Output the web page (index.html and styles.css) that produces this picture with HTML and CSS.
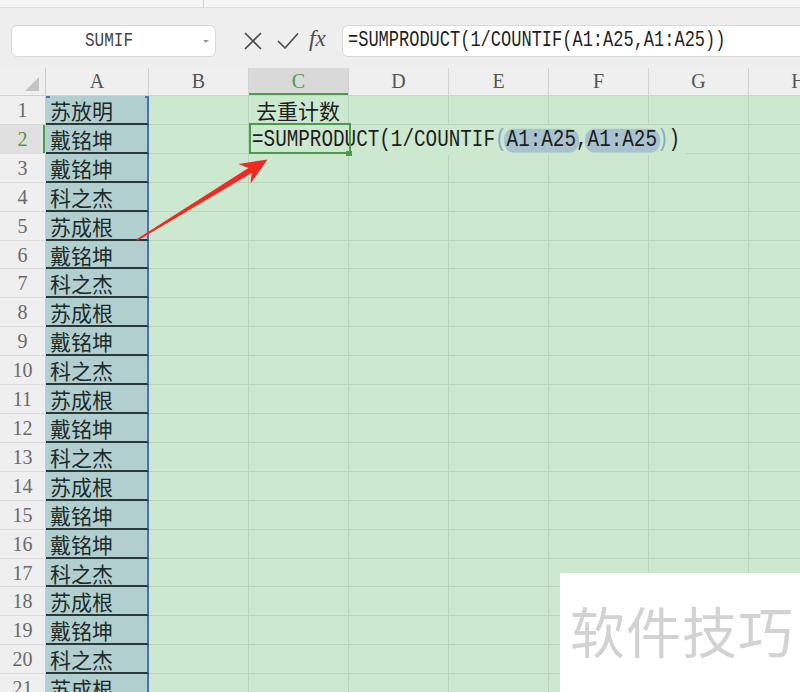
FILE: index.html
```html
<!DOCTYPE html>
<html lang="zh">
<head>
<meta charset="utf-8">
<title>去重计数</title>
<link rel="stylesheet" href="styles.css">
</head>
<body>
<div class="app">
  <div class="tabstrip"><span class="tabsep"></span></div>
  <div class="toolbar">
    <div class="namebox"><span class="namebox-text"><span class="tall">SUMIF</span></span><span class="caret"></span></div>
    <div class="fxicons">
      <svg class="ic-x" width="18" height="18" viewBox="0 0 18 18"><path d="M1.5 1.5 L16.5 16.5 M16.5 1.5 L1.5 16.5" fill="none" stroke="#4d4d4d" stroke-width="1.7" stroke-linecap="round"/></svg>
      <svg class="ic-check" width="22" height="18" viewBox="0 0 22 18"><path d="M1.5 9.5 L8 16 L20.5 2" fill="none" stroke="#4d4d4d" stroke-width="1.7" stroke-linecap="round" stroke-linejoin="round"/></svg>
      <span class="fx">fx</span>
    </div>
    <div class="formulabar"><span class="tall">=SUMPRODUCT(1/COUNTIF(A1:A25,A1:A25))</span></div>
  </div>

  <div class="sheet">
    <div class="hrow">
      <div class="corner"><span class="tri"></span></div>
      <div class="hc hc-a">A</div>
      <div class="hc">B</div>
      <div class="hc active">C</div>
      <div class="hc">D</div>
      <div class="hc">E</div>
      <div class="hc">F</div>
      <div class="hc">G</div>
      <div class="hc">H</div>
    </div>

    <div class="row">
      <div class="rh">1</div>
      <div class="ca first">苏放明</div>
      <div class="rest"><div class="cb"></div><div class="cc title">去重计数</div></div>
    </div>
    <div class="row">
      <div class="rh active">2</div>
      <div class="ca">戴铭坤</div>
      <div class="rest"><div class="cb"></div><div class="cc sel"><span class="ftext">=SUMPRODUCT(1/COUNTIF<span class="par">(</span><span class="ref">A1:A25</span>,<span class="ref">A1:A25</span><span class="par">)</span>)</span></div></div>
    </div>
    <div class="row"><div class="rh">3</div><div class="ca">戴铭坤</div><div class="rest"></div></div>
    <div class="row"><div class="rh">4</div><div class="ca">科之杰</div><div class="rest"></div></div>
    <div class="row"><div class="rh">5</div><div class="ca">苏成根</div><div class="rest"></div></div>
    <div class="row"><div class="rh">6</div><div class="ca">戴铭坤</div><div class="rest"></div></div>
    <div class="row"><div class="rh">7</div><div class="ca">科之杰</div><div class="rest"></div></div>
    <div class="row"><div class="rh">8</div><div class="ca">苏成根</div><div class="rest"></div></div>
    <div class="row"><div class="rh">9</div><div class="ca">戴铭坤</div><div class="rest"></div></div>
    <div class="row"><div class="rh">10</div><div class="ca">科之杰</div><div class="rest"></div></div>
    <div class="row"><div class="rh">11</div><div class="ca">苏成根</div><div class="rest"></div></div>
    <div class="row"><div class="rh">12</div><div class="ca">戴铭坤</div><div class="rest"></div></div>
    <div class="row"><div class="rh">13</div><div class="ca">科之杰</div><div class="rest"></div></div>
    <div class="row"><div class="rh">14</div><div class="ca">苏成根</div><div class="rest"></div></div>
    <div class="row"><div class="rh">15</div><div class="ca">戴铭坤</div><div class="rest"></div></div>
    <div class="row"><div class="rh">16</div><div class="ca">戴铭坤</div><div class="rest"></div></div>
    <div class="row"><div class="rh">17</div><div class="ca">科之杰</div><div class="rest"></div></div>
    <div class="row"><div class="rh">18</div><div class="ca">苏成根</div><div class="rest"></div></div>
    <div class="row"><div class="rh">19</div><div class="ca">戴铭坤</div><div class="rest"></div></div>
    <div class="row"><div class="rh">20</div><div class="ca">科之杰</div><div class="rest"></div></div>
    <div class="row"><div class="rh">21</div><div class="ca">苏成根</div><div class="rest"></div></div>
  </div>

  <svg class="arrow" width="800" height="692" viewBox="0 0 800 692">
    <polygon points="137.4,240.8 251.6,173 250.6,183.5 267.5,159.5 238.5,164 248.4,167.9 136.6,239.2" fill="#ee2a23"/>
  </svg>

  <div class="watermark">软件技巧</div>
</div>
</body>
</html>
```

FILE: styles.css
```css
html, body {
  margin: 0;
  padding: 0;
  background: #ffffff;
}

.app {
  position: relative;
  width: 800px;
  height: 692px;
  overflow: hidden;
  background: #eeeeee;
}

.tall {
  display: inline-block;
  transform: scaleY(1.3);
}

/* top strip (tabs) */
.tabstrip {
  height: 7px;
  background: #f6f6f6;
  border-bottom: 1px solid #dcdcdc;
  display: flex;
}
.tabsep {
  margin-left: 203px;
  width: 1px;
  background: #d4d4d4;
}

/* toolbar */
.toolbar {
  height: 60px;
  box-sizing: border-box;
  padding-top: 17px;
  display: flex;
  align-items: flex-start;
  background: #eeeeee;
}
.namebox {
  margin-left: 11px;
  width: 205px;
  height: 32px;
  box-sizing: border-box;
  background: #ffffff;
  border: 1px solid #d9d9d9;
  border-radius: 6px;
  display: flex;
  align-items: center;
}
.namebox-text {
  flex: 1;
  text-align: center;
  padding-left: 3px;
  font-family: "Liberation Mono", monospace;
  font-size: 16px;
  line-height: 30px;
  color: #444444;
}
.caret {
  width: 0;
  height: 0;
  margin-right: 6px;
  border-left: 3px solid transparent;
  border-right: 3px solid transparent;
  border-top: 3px solid #9a9a9a;
}
.fxicons {
  height: 32px;
  margin-left: 28px;
  display: flex;
  align-items: center;
}
.ic-check {
  margin-left: 15px;
}
.fx {
  margin-left: 10px;
  width: 24px;
  font-family: "Liberation Serif", serif;
  font-style: italic;
  font-size: 23px;
  color: #4d4d4d;
  line-height: 32px;
  position: relative;
  top: -2px;
}
.formulabar {
  flex: 1;
  margin-left: 9px;
  height: 32px;
  box-sizing: border-box;
  background: #ffffff;
  border: 1px solid #d9d9d9;
  border-right: none;
  border-radius: 6px 0 0 6px;
  padding-left: 5px;
  font-family: "Liberation Mono", monospace;
  font-size: 17px;
  line-height: 30px;
  color: #1f1f1f;
  white-space: nowrap;
}

/* sheet */
.sheet {
  width: 1000px;
}
.hrow {
  height: 28px;
  display: flex;
  background: #efefef;
  box-sizing: border-box;
  border-bottom: 1px solid #cfcfcf;
}
.corner {
  width: 46px;
  box-sizing: border-box;
  border-right: 1px solid #cfcfcf;
  position: relative;
}
.tri {
  position: absolute;
  right: 6px;
  bottom: 4px;
  width: 0;
  height: 0;
  border-left: 14px solid transparent;
  border-bottom: 14px solid #c4c4c4;
}
.hc {
  width: 100px;
  box-sizing: border-box;
  border-right: 1px solid #d2d2d2;
  text-align: center;
  font-family: "Liberation Serif", serif;
  font-size: 20px;
  line-height: 27px;
  color: #555555;
}
.hc-a {
  width: 103px;
}
.hc.active {
  background: #d9d9d9;
  color: #4a9a4a;
  box-shadow: inset 0 -2px 0 #4c9a4c;
}

.row {
  height: 28.92px;
  display: flex;
}
.rh {
  width: 46px;
  flex: none;
  box-sizing: border-box;
  background: #efefef;
  border-right: 1px solid #cccccc;
  border-bottom: 1px solid #dadada;
  text-align: center;
  font-family: "Liberation Serif", serif;
  font-size: 20px;
  line-height: 28px;
  color: #6a6a6a;
}
.rh.active {
  background: #e0e0e0;
  color: #4a9a4a;
  box-shadow: inset -2px 0 0 #4c9a4c;
}
.ca {
  width: 103px;
  flex: none;
  box-sizing: border-box;
  background: #b2cfd0;
  border-bottom: 2px solid #2b3838;
  border-right: 2px solid #4e6fbd;
  padding-left: 4px;
  font-family: "Noto Sans CJK SC", sans-serif;
  font-size: 21px;
  line-height: 28px;
  color: #1d2a2a;
  position: relative;
}
.ca.first::before,
.ca.first::after {
  content: "";
  position: absolute;
  top: 0;
  width: 4px;
  height: 2px;
  background: #4e6fbd;
}
.ca.first::before { left: 0; }
.ca.first::after { right: -2px; }

.rest {
  flex: 1;
  display: flex;
  box-sizing: border-box;
  background-color: #cce8cf;
  background-image: repeating-linear-gradient(to right, transparent 0, transparent 99px, #b7d5bb 99px, #b7d5bb 100px);
  border-bottom: 1px solid #b9d6bd;
}
.cb {
  width: 100px;
  flex: none;
}
.cc {
  width: 100px;
  flex: none;
  position: relative;
  white-space: nowrap;
}
.cc.title {
  padding-left: 7px;
  font-family: "Noto Sans CJK SC", sans-serif;
  font-size: 21px;
  line-height: 28px;
  color: #1d1d1d;
}
.cc.sel::after {
  content: "";
  position: absolute;
  left: 0;
  top: -2px;
  width: 102px;
  height: 31px;
  box-sizing: border-box;
  border: 2px solid #4c9a4c;
}
.cc.sel::before {
  content: "";
  position: absolute;
  left: 97px;
  top: 26px;
  width: 6px;
  height: 5px;
  background: #4c9a4c;
  z-index: 1;
}
.ftext {
  display: inline-block;
  padding: 0 6px 0 3px;
  margin-top: 3px;
  background: #cce8cf;
  font-family: "Liberation Mono", monospace;
  font-size: 19.3px;
  line-height: 24px;
  color: #1d1d1d;
  transform: scaleY(1.25);
}
.par {
  color: #8aa9c4;
}
.ref {
  display: inline-block;
  background: #a8c3cf;
  border-radius: 9px / 8px;
  line-height: 19px;
  padding: 0 3px;
  margin: 0 -3px;
}

.arrow {
  position: absolute;
  left: 0;
  top: 0;
  pointer-events: none;
}

.watermark {
  position: absolute;
  left: 560px;
  top: 573px;
  right: 0;
  bottom: 0;
  background: #ffffff;
  box-sizing: border-box;
  padding: 29px 0 0 10px;
  font-family: "Noto Sans CJK SC", sans-serif;
  font-size: 55px;
  line-height: 55px;
  letter-spacing: 1px;
  color: #d2d2d2;
  white-space: nowrap;
}
```
